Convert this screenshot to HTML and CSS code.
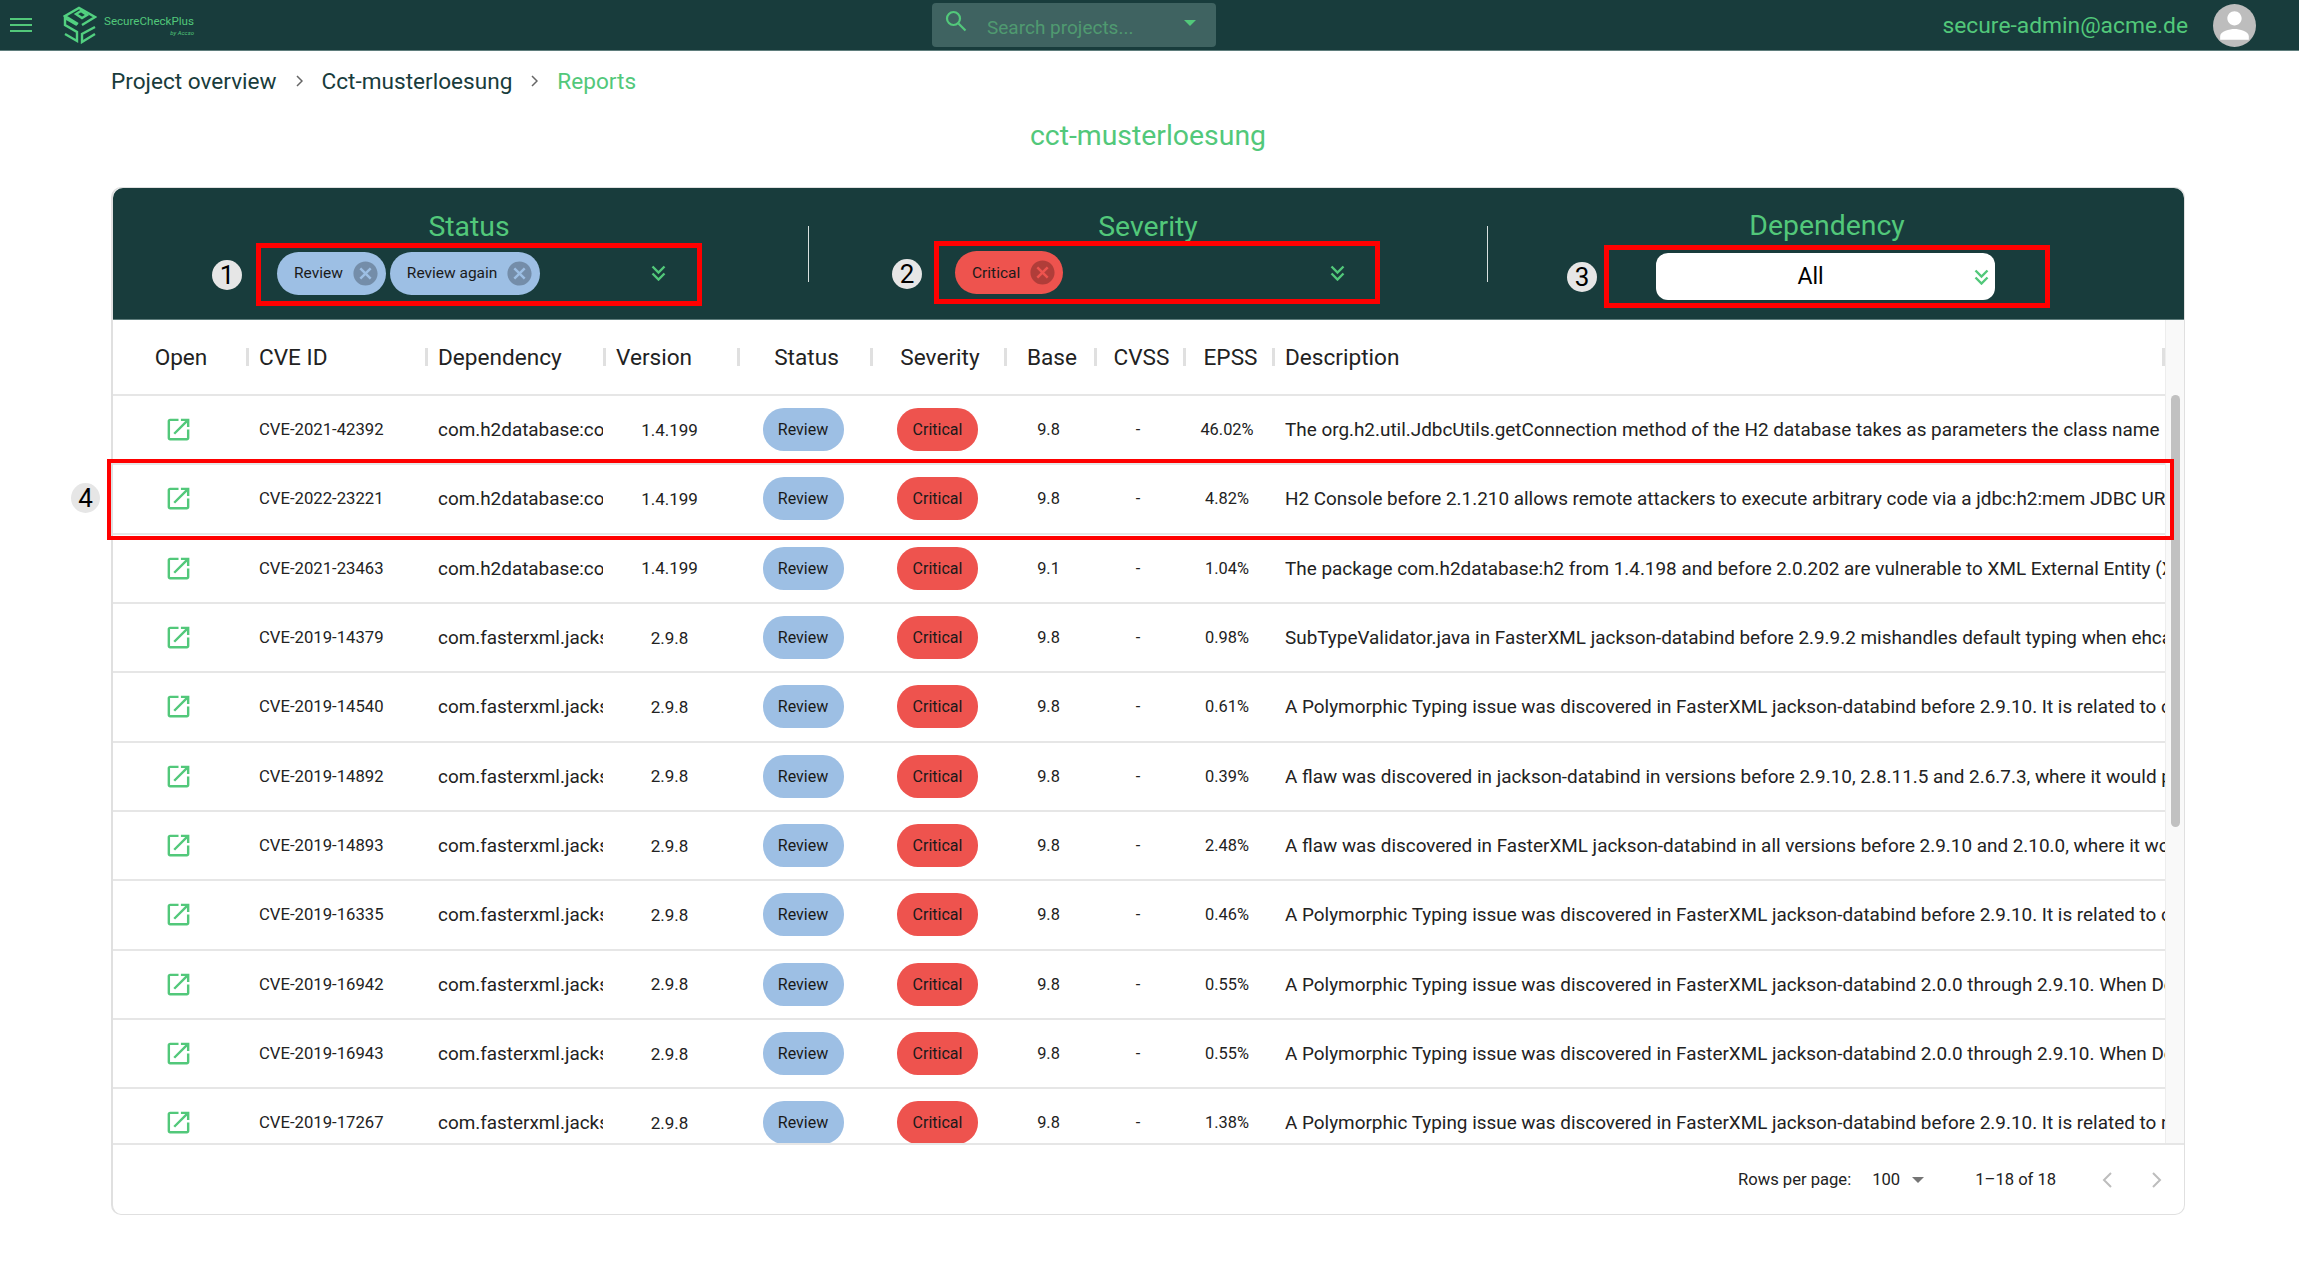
FILE: index.html
```html
<!DOCTYPE html>
<html lang="en">
<head>
  <meta charset="UTF-8">
  <title>SecureCheckPlus - Reports</title>
  <link rel="stylesheet" href="styles.css">
</head>
<body>
  <svg class="defs" aria-hidden="true">
    <symbol id="open" viewBox="0 0 24 24"><path d="M19 19H5V5h7V3H5c-1.11 0-2 .9-2 2v14c0 1.1.89 2 2 2h14c1.1 0 2-.9 2-2v-7h-2v7zM14 3v2h3.59l-9.83 9.83 1.41 1.41L19 6.41V10h2V3h-7z"/></symbol>
    <symbol id="cancel" viewBox="0 0 24 24"><path d="M12 2C6.47 2 2 6.47 2 12s4.47 10 10 10 10-4.47 10-10S17.53 2 12 2zm5 13.59L15.59 17 12 13.41 8.41 17 7 15.59 10.59 12 7 8.41 8.41 7 12 10.59 15.59 7 17 8.41 13.41 12 17 15.59z"/></symbol>
    <symbol id="dchev" viewBox="0 0 15 16"><path d="M1.500 1.500l6 6 6-6M1.500 8.500l6 6 6-6" fill="none" stroke="currentColor" stroke-width="2.400"/></symbol>
  </svg>

  <header class="topbar">
    <svg class="burger" viewBox="0 0 22 14"><path d="M0 1h22M0 7h22M0 13h22" stroke="#52c87a" stroke-width="2.200"/></svg>
    <svg class="logo" viewBox="0 0 34 38" fill="none" stroke="#52d080" stroke-width="2.400">
      <path d="M15 18L2 10 16 2l16 9-13 8"/>
      <path d="M13 8l5-3 6 4-5 3z"/>
      <path d="M14 19L2 12v7l12 7v9L2 28"/>
      <path d="M32 21l-13 7v8l13-8"/>
    </svg>
    <div class="brand">
      <span class="brand-name">SecureCheckPlus</span>
      <span class="brand-by">by Accso</span>
    </div>
    <div class="search">
      <svg class="search-icon" viewBox="0 0 24 24" fill="none" stroke="#52c87a" stroke-width="2.200"><circle cx="9.500" cy="9.500" r="6.500"/><path d="M14.500 14.500l7 7"/></svg>
      <span class="search-text">Search projects...</span>
      <span class="search-arrow"></span>
    </div>
    <div class="user">secure-admin@acme.de</div>
    <svg class="avatar" viewBox="0 0 24 24"><circle cx="12" cy="12" r="12" fill="#bdbdbd"/><path fill="#fff" d="M12 12c2.210 0 4-1.790 4-4s-1.790-4-4-4-4 1.790-4 4 1.790 4 4 4zm0 2c-2.670 0-8 1.340-8 4v2h16v-2c0-2.660-5.330-4-8-4z"/></svg>
  </header>

  <main class="page">
    <nav class="crumbs">
      <span>Project overview</span>
      <svg class="crumb-sep" viewBox="0 0 7 12"><path d="M1 1l5 5-5 5" fill="none" stroke="#666" stroke-width="1.500"/></svg>
      <span>Cct-musterloesung</span>
      <svg class="crumb-sep" viewBox="0 0 7 12"><path d="M1 1l5 5-5 5" fill="none" stroke="#666" stroke-width="1.500"/></svg>
      <span class="crumb-current">Reports</span>
    </nav>
    <h1 class="title">cct-musterloesung</h1>

    <section class="card">
      <div class="filters">
        <div class="filter filter-status">
          <div class="filter-title">Status</div>
          <div class="filter-row">
            <span class="num">1</span>
            <div class="mark-box">
              <span class="chip chip-blue">Review<svg class="chip-x"><use href="#cancel"/></svg></span>
              <span class="chip chip-blue">Review again<svg class="chip-x"><use href="#cancel"/></svg></span>
              <svg class="dchev"><use href="#dchev"/></svg>
            </div>
          </div>
        </div>
        <div class="filter-sep"></div>
        <div class="filter filter-severity">
          <div class="filter-title">Severity</div>
          <div class="filter-row">
            <span class="num">2</span>
            <div class="mark-box">
              <span class="chip chip-red">Critical<svg class="chip-x"><use href="#cancel"/></svg></span>
              <svg class="dchev"><use href="#dchev"/></svg>
            </div>
          </div>
        </div>
        <div class="filter-sep"></div>
        <div class="filter filter-dep">
          <div class="filter-title">Dependency</div>
          <div class="filter-row">
            <span class="num">3</span>
            <div class="mark-box">
              <div class="dep-select"><span class="dep-value">All</span><svg class="dchev"><use href="#dchev"/></svg></div>
            </div>
          </div>
        </div>
      </div>

      <div class="table-area">
        <div class="table-wrap">
          <table class="cve-table">
            <colgroup>
              <col class="c-open"><col class="c-cve"><col class="c-dep"><col class="c-ver"><col class="c-status"><col class="c-sev"><col class="c-base"><col class="c-cvss"><col class="c-epss"><col class="c-desc">
            </colgroup>
            <thead>
              <tr>
                <th class="mid">Open</th><th>CVE ID</th><th>Dependency</th><th>Version</th><th class="mid">Status</th><th class="mid">Severity</th><th class="mid">Base</th><th class="mid">CVSS</th><th class="mid">EPSS</th><th>Description</th>
              </tr>
            </thead>
            <tbody>
              <tr><td class="mid"><svg class="open-icon"><use href="#open"/></svg></td><td class="cve">CVE-2021-42392</td><td class="dep"><span class="dep-name">com.h2database:com.h2database</span></td><td class="num-cell ver">1.4.199</td><td class="mid"><span class="pill pill-blue">Review</span></td><td class="mid"><span class="pill pill-red">Critical</span></td><td class="num-cell">9.8</td><td class="num-cell">-</td><td class="num-cell">46.02%</td><td class="desc">The org.h2.util.JdbcUtils.getConnection method of the H2 database takes as parameters the class name</td></tr>
              <tr><td class="mid"><svg class="open-icon"><use href="#open"/></svg></td><td class="cve">CVE-2022-23221</td><td class="dep"><span class="dep-name">com.h2database:com.h2database</span></td><td class="num-cell ver">1.4.199</td><td class="mid"><span class="pill pill-blue">Review</span></td><td class="mid"><span class="pill pill-red">Critical</span></td><td class="num-cell">9.8</td><td class="num-cell">-</td><td class="num-cell">4.82%</td><td class="desc">H2 Console before 2.1.210 allows remote attackers to execute arbitrary code via a jdbc:h2:mem JDBC URL containing the substring</td></tr>
              <tr><td class="mid"><svg class="open-icon"><use href="#open"/></svg></td><td class="cve">CVE-2021-23463</td><td class="dep"><span class="dep-name">com.h2database:com.h2database</span></td><td class="num-cell ver">1.4.199</td><td class="mid"><span class="pill pill-blue">Review</span></td><td class="mid"><span class="pill pill-red">Critical</span></td><td class="num-cell">9.1</td><td class="num-cell">-</td><td class="num-cell">1.04%</td><td class="desc">The package com.h2database:h2 from 1.4.198 and before 2.0.202 are vulnerable to XML External Entity (XXE) Injection via the</td></tr>
              <tr><td class="mid"><svg class="open-icon"><use href="#open"/></svg></td><td class="cve">CVE-2019-14379</td><td class="dep"><span class="dep-name">com.fasterxml.jackson.core:jackson</span></td><td class="num-cell ver">2.9.8</td><td class="mid"><span class="pill pill-blue">Review</span></td><td class="mid"><span class="pill pill-red">Critical</span></td><td class="num-cell">9.8</td><td class="num-cell">-</td><td class="num-cell">0.98%</td><td class="desc">SubTypeValidator.java in FasterXML jackson-databind before 2.9.9.2 mishandles default typing when ehcache is used</td></tr>
              <tr><td class="mid"><svg class="open-icon"><use href="#open"/></svg></td><td class="cve">CVE-2019-14540</td><td class="dep"><span class="dep-name">com.fasterxml.jackson.core:jackson</span></td><td class="num-cell ver">2.9.8</td><td class="mid"><span class="pill pill-blue">Review</span></td><td class="mid"><span class="pill pill-red">Critical</span></td><td class="num-cell">9.8</td><td class="num-cell">-</td><td class="num-cell">0.61%</td><td class="desc">A Polymorphic Typing issue was discovered in FasterXML jackson-databind before 2.9.10. It is related to com.zaxxer.hikari</td></tr>
              <tr><td class="mid"><svg class="open-icon"><use href="#open"/></svg></td><td class="cve">CVE-2019-14892</td><td class="dep"><span class="dep-name">com.fasterxml.jackson.core:jackson</span></td><td class="num-cell ver">2.9.8</td><td class="mid"><span class="pill pill-blue">Review</span></td><td class="mid"><span class="pill pill-red">Critical</span></td><td class="num-cell">9.8</td><td class="num-cell">-</td><td class="num-cell">0.39%</td><td class="desc">A flaw was discovered in jackson-databind in versions before 2.9.10, 2.8.11.5 and 2.6.7.3, where it would permit polymorphic</td></tr>
              <tr><td class="mid"><svg class="open-icon"><use href="#open"/></svg></td><td class="cve">CVE-2019-14893</td><td class="dep"><span class="dep-name">com.fasterxml.jackson.core:jackson</span></td><td class="num-cell ver">2.9.8</td><td class="mid"><span class="pill pill-blue">Review</span></td><td class="mid"><span class="pill pill-red">Critical</span></td><td class="num-cell">9.8</td><td class="num-cell">-</td><td class="num-cell">2.48%</td><td class="desc">A flaw was discovered in FasterXML jackson-databind in all versions before 2.9.10 and 2.10.0, where it would permit polymorphic</td></tr>
              <tr><td class="mid"><svg class="open-icon"><use href="#open"/></svg></td><td class="cve">CVE-2019-16335</td><td class="dep"><span class="dep-name">com.fasterxml.jackson.core:jackson</span></td><td class="num-cell ver">2.9.8</td><td class="mid"><span class="pill pill-blue">Review</span></td><td class="mid"><span class="pill pill-red">Critical</span></td><td class="num-cell">9.8</td><td class="num-cell">-</td><td class="num-cell">0.46%</td><td class="desc">A Polymorphic Typing issue was discovered in FasterXML jackson-databind before 2.9.10. It is related to com.zaxxer.hikari</td></tr>
              <tr><td class="mid"><svg class="open-icon"><use href="#open"/></svg></td><td class="cve">CVE-2019-16942</td><td class="dep"><span class="dep-name">com.fasterxml.jackson.core:jackson</span></td><td class="num-cell ver">2.9.8</td><td class="mid"><span class="pill pill-blue">Review</span></td><td class="mid"><span class="pill pill-red">Critical</span></td><td class="num-cell">9.8</td><td class="num-cell">-</td><td class="num-cell">0.55%</td><td class="desc">A Polymorphic Typing issue was discovered in FasterXML jackson-databind 2.0.0 through 2.9.10. When Default Typing is enabled</td></tr>
              <tr><td class="mid"><svg class="open-icon"><use href="#open"/></svg></td><td class="cve">CVE-2019-16943</td><td class="dep"><span class="dep-name">com.fasterxml.jackson.core:jackson</span></td><td class="num-cell ver">2.9.8</td><td class="mid"><span class="pill pill-blue">Review</span></td><td class="mid"><span class="pill pill-red">Critical</span></td><td class="num-cell">9.8</td><td class="num-cell">-</td><td class="num-cell">0.55%</td><td class="desc">A Polymorphic Typing issue was discovered in FasterXML jackson-databind 2.0.0 through 2.9.10. When Default Typing is enabled</td></tr>
              <tr><td class="mid"><svg class="open-icon"><use href="#open"/></svg></td><td class="cve">CVE-2019-17267</td><td class="dep"><span class="dep-name">com.fasterxml.jackson.core:jackson</span></td><td class="num-cell ver">2.9.8</td><td class="mid"><span class="pill pill-blue">Review</span></td><td class="mid"><span class="pill pill-red">Critical</span></td><td class="num-cell">9.8</td><td class="num-cell">-</td><td class="num-cell">1.38%</td><td class="desc">A Polymorphic Typing issue was discovered in FasterXML jackson-databind before 2.9.10. It is related to net.sf.ehcache</td></tr>
            </tbody>
          </table>
        </div>
        <div class="scroll-gutter"><div class="scroll-thumb"></div></div>
      </div>

      <footer class="pager">
        <span>Rows per page:</span>
        <span class="pager-size">100</span>
        <span class="pager-arrow"></span>
        <span class="pager-range">1–18 of 18</span>
        <svg class="pager-nav" viewBox="0 0 12 18"><path d="M10 2L3 9l7 7" fill="none" stroke="#bdbdbd" stroke-width="2"/></svg>
        <svg class="pager-nav" viewBox="0 0 12 18"><path d="M2 2l7 7-7 7" fill="none" stroke="#bdbdbd" stroke-width="2"/></svg>
      </footer>

      <div class="row-mark"></div>
      <span class="num num-row">4</span>
    </section>
  </main>
</body>
</html>
```

FILE: styles.css
```css
* { box-sizing: border-box; }
html, body { height: 100%; }
body {
  margin: 0;
  background: #fff;
  color: #222;
  font-family: Roboto, "Liberation Sans", sans-serif;
  overflow: hidden;
}
.defs { display: none; }

/* top bar */
.topbar {
  display: flex;
  align-items: center;
  height: 51px;
  padding: 0 43px 0 10px;
  background: #183c3c;
  border-bottom: 1px solid #5f7d7c;
}
.burger { width: 22px; height: 14px; }
.logo { width: 34px; height: 38px; margin-left: 31px; }
.brand {
  display: flex;
  flex-direction: column;
  width: 90px;
  margin-left: 7px;
  color: #52c87a;
}
.brand-name { font-size: 11.600px; line-height: 15px; white-space: nowrap; }
.brand-by { font-size: 6px; line-height: 8px; text-align: right; font-style: italic; }
.search {
  display: flex;
  align-items: center;
  width: 284px;
  height: 44px;
  margin-left: 738px;
  padding: 0 20px 0 12px;
  background: #3f6361;
  border-radius: 4px;
}
.search-icon { width: 24px; height: 24px; margin-top: -8px; }
.search-text { margin-left: 19px; font-size: 19px; color: #4f9a70; flex: 1; padding-top: 4px; }
.search-arrow {
  border-left: 6px solid transparent;
  border-right: 6px solid transparent;
  border-top: 6px solid #52c87a;
  margin-top: -5px;
}
.user { margin-left: auto; font-size: 22.800px; color: #52c87a; }
.avatar { width: 43px; height: 43px; margin-left: 25px; }

/* page */
.page { padding: 0 114px 0 111px; }
.crumbs {
  display: flex;
  align-items: center;
  gap: 19px;
  height: 60px;
  font-size: 22.600px;
  color: #183c3c;
}
.crumb-sep { width: 7px; height: 12px; }
.crumb-current { color: #52c87a; }
.title {
  margin: 9px 0 35px;
  font-size: 28.400px;
  line-height: 32px;
  font-weight: 400;
  text-align: center;
  color: #52c87a;
}

/* card */
.card {
  position: relative;
  border: 1px solid #e0e0e0;
  border-left-width: 2px;
  border-radius: 10px;
  height: 1028px;
  display: flex;
  flex-direction: column;
}
.filters {
  display: flex;
  flex: none;
  height: 132px;
  padding: 0 18px 0 17px;
  background: #183c3c;
  border-radius: 10px 10px 0 0;
  border-bottom: 1px solid #5f7d7c;
}
.filter { width: 678px; padding-top: 23px; }
.filter-title {
  font-size: 28.400px;
  line-height: 32px;
  text-align: center;
  color: #52c87a;
}
.filter-sep {
  flex: none;
  width: 1px;
  height: 56px;
  margin-top: 38px;
  background: #d8e0df;
}
.filter-row { display: flex; align-items: center; }
.num {
  display: flex;
  align-items: center;
  justify-content: center;
  flex: none;
  width: 30px;
  height: 30px;
  border-radius: 50%;
  background: #e6e6e6;
  color: #000;
  font-size: 26px;
  line-height: 30px;
}
.mark-box {
  display: flex;
  align-items: center;
  gap: 4px;
  width: 446px;
  height: 63px;
  padding-left: 16px;
  border: 5px solid #f00;
}
.filter-status .filter-row { padding-left: 82px; }
.filter-status .mark-box { margin-left: 14px; padding-bottom: 3px; }
.filter-status .dchev { margin-left: 107px; }
.filter-severity .filter-row { padding-left: 83px; }
.filter-severity .mark-box { margin-left: 12px; margin-top: -2px; }
.filter-severity .dchev { margin-left: 263px; }
.filter-dep { padding-top: 22px; }
.filter-dep .filter-row { padding-left: 79px; padding-top: 3px; }
.filter-dep .mark-box { margin-left: 7px; padding-left: 47px; }
.dchev { flex: none; width: 15px; height: 16px; color: #52c87a; }
.chip {
  display: inline-flex;
  align-items: center;
  height: 43px;
  padding: 0 6px 0 17px;
  border-radius: 22px;
  font-size: 15.500px;
  color: #1a1a1a;
  white-space: nowrap;
}
.chip-blue { background: #9dbfe4; }
.chip-red { background: #ee534e; }
.chip-x { width: 29px; height: 29px; margin-left: 8px; fill: rgba(0, 0, 0, .26); }
.dep-select {
  display: flex;
  align-items: center;
  width: 339px;
  height: 47px;
  padding-right: 6px;
  background: #fff;
  border-radius: 12px;
}
.dep-value { flex: 1; padding-right: 9px; text-align: center; font-size: 23px; color: #000; }

/* table */
.table-area { display: flex; flex: 1; min-height: 0; }
.table-wrap { width: 2052px; flex: none; overflow: hidden; }
.cve-table {
  width: 2052px;
  table-layout: fixed;
  border-collapse: collapse;
}
.c-open { width: 136px; }
.c-cve { width: 179px; }
.c-dep { width: 178px; }
.c-ver { width: 134px; }
.c-status { width: 133px; }
.c-sev { width: 134px; }
.c-base { width: 90px; }
.c-cvss { width: 89px; }
.c-epss { width: 89px; }
.c-desc { width: 890px; }
.cve-table th {
  height: 75px;
  padding: 0 0 0 10px;
  text-align: left;
  font-size: 22.600px;
  font-weight: 400;
  color: #222;
  border-bottom: 2px solid #e6e6e6;
  background: linear-gradient(#e0e0e0, #e0e0e0) right center / 3px 18px no-repeat;
}
.cve-table th.mid { text-align: center; padding: 0; }
.cve-table td {
  height: 69.330px;
  padding: 0 0 0 10px;
  white-space: nowrap;
  overflow: hidden;
  border-bottom: 2px solid #e6e6e6;
  font-size: 16.700px;
}
.cve-table td.mid { text-align: center; padding: 0 5px 0 0; }
.cve-table td.num-cell { text-align: center; padding: 0 7px 0 0; }
.cve-table td.num-cell { font-size: 16.400px; }
.cve-table td.ver { font-size: 17px; }
.cve-table td.dep { font-size: 18.900px; }
.cve-table td.desc { font-size: 18.900px; }
.dep-name { display: block; width: 165px; overflow: hidden; }
.open-icon {
  display: block;
  width: 29px;
  height: 29px;
  margin: 0 auto;
  fill: #52c87a;
}
.pill {
  display: inline-flex;
  align-items: center;
  justify-content: center;
  vertical-align: middle;
  width: 81px;
  height: 43px;
  border-radius: 21px;
  font-size: 16px;
  color: #1a1a1a;
}
.pill-blue { background: #9dbfe4; margin-right: 2px; }
.pill-red { background: #ee534e; }
.scroll-gutter {
  flex: 1;
  padding: 75px 4px 0 5px;
  background: #f9f9f9;
  border-left: 1px solid #ededed;
}
.scroll-thumb { height: 432px; background: #c1c1c1; border-radius: 5px; }

/* pagination */
.pager {
  display: flex;
  align-items: center;
  flex: none;
  height: 71px;
  padding: 0 0 0 1625px;
  border-top: 2px solid #e6e6e6;
  font-size: 16.600px;
}
.pager-size { margin-left: 21px; }
.pager-arrow {
  margin-left: 12px;
  border-left: 6px solid transparent;
  border-right: 6px solid transparent;
  border-top: 6px solid #757575;
}
.pager-range { margin-left: 51px; margin-right: 45px; }
.pager-nav { width: 12px; height: 18px; }
.pager-nav + .pager-nav { margin-left: 38px; }

/* annotation over the highlighted row */
.row-mark {
  position: absolute;
  left: -6px;
  top: 271px;
  width: 2067px;
  height: 81px;
  border: 4px solid #f00;
}
.num-row {
  position: absolute;
  left: -42px;
  top: 295px;
  width: 29px;
}
```
